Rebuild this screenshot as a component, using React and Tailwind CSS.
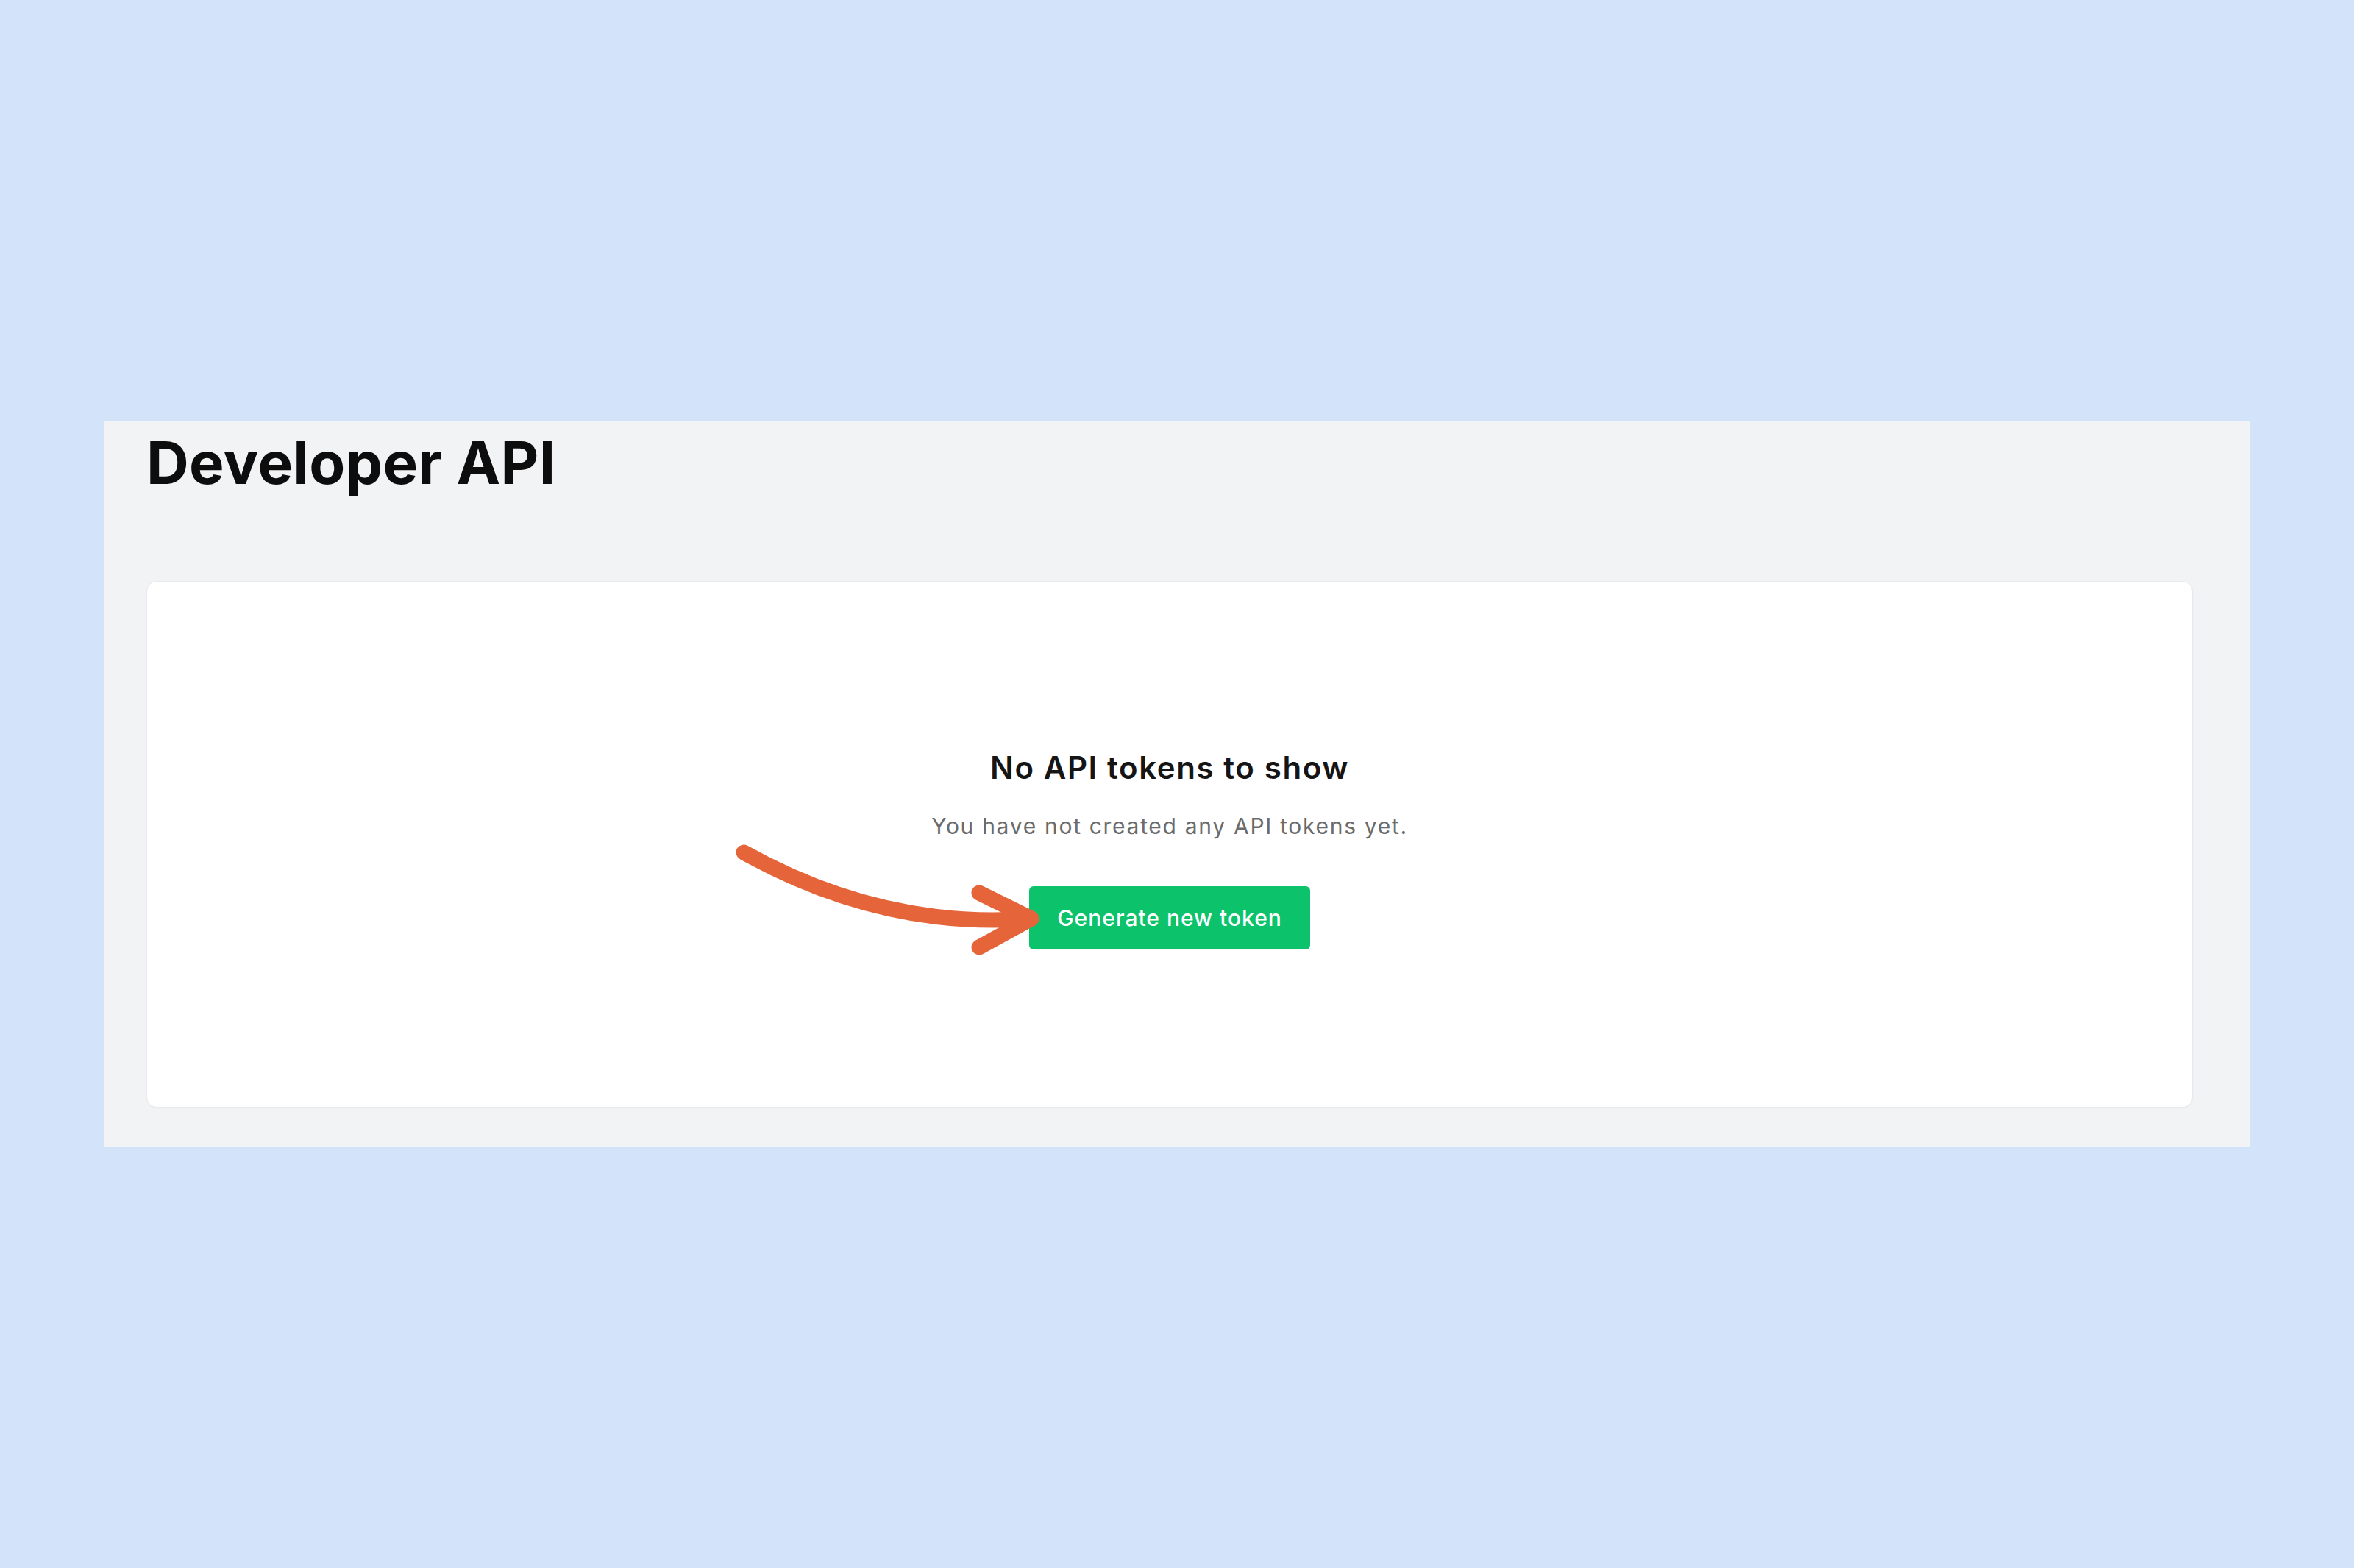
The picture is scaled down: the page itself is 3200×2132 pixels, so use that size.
import React from "react";

const Arrow = () => (
  <svg
    className="absolute left-[-400px] top-[-60px] pointer-events-none"
    width="420"
    height="160"
    viewBox="-400 -60 420 160"
    fill="none"
  >
    <path
      d="M -388 -46 C -270 20, -140 55, 3 44"
      stroke="#e6643a"
      strokeWidth="21"
      strokeLinecap="round"
    />
    <path
      d="M -68 9 L 3 44 L -68 83"
      stroke="#e6643a"
      strokeWidth="21"
      strokeLinecap="round"
      strokeLinejoin="round"
    />
  </svg>
);

const App = () => {
  return (
    <div className="min-h-screen w-full bg-[#d3e3fa] flex items-center justify-center font-['Inter',sans-serif]">
      <div className="w-[2916px] bg-[#f2f3f5] pt-[16px] pl-[57px] pr-[77px] pb-[53px]">
        <h1 className="text-[80px] leading-none font-bold text-[#0d0d0d] tracking-[0.3px]">Developer API</h1>

        <div className="mt-[121px] h-[716px] bg-white rounded-[14px] border border-[#e7e9ee] shadow-[0_1px_2px_rgba(0,0,0,0.03)] flex flex-col items-center pt-[232px]">
          <h2 className="text-[42px] leading-none font-semibold text-[#151515] tracking-[1.6px]">No API tokens to show</h2>
          <p className="mt-[43px] text-[30px] leading-none text-[#6b6b6b] tracking-[1.7px]">
            You have not created any API tokens yet.
          </p>
          <div className="relative mt-[67px]">
            <button className="h-[86px] px-[38px] bg-[#0cc36b] rounded-[6px] text-white text-[30px] font-medium tracking-[1px]">
              Generate new token
            </button>
            <Arrow />
          </div>
        </div>
      </div>
    </div>
  );
};

export default App;
